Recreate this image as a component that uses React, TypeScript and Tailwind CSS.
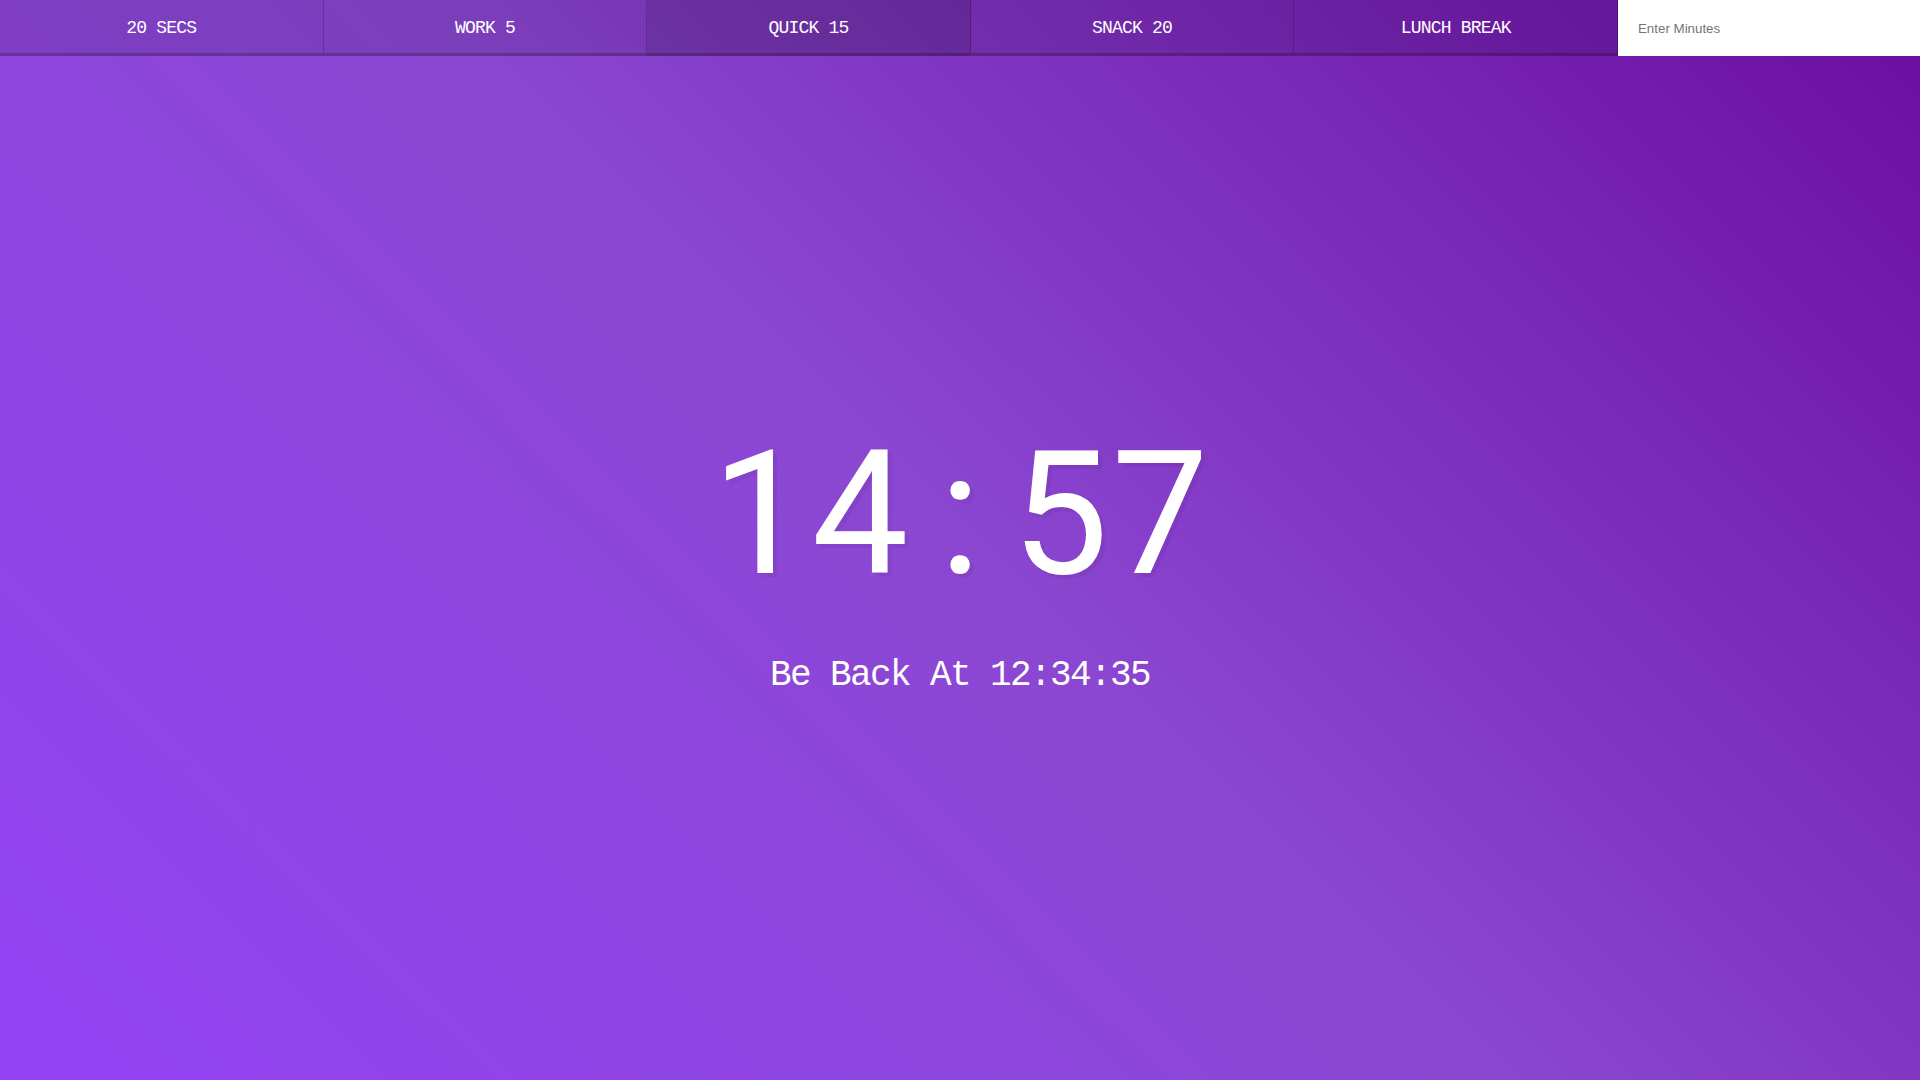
import React from "react";

const buttons = ["20 Secs", "Work 5", "Quick 15", "Snack 20", "Lunch Break"];

function Cells({ text, cls }: { text: string; cls: string }) {
  return (
    <div className="flex">
      {text.split("").map((c, i) => (
        <span key={i} className={cls}>
          {c}
        </span>
      ))}
    </div>
  );
}

export default function App() {
  return (
    <div className="flex min-h-screen w-full flex-col bg-[linear-gradient(45deg,#9342f5_0%,#8b47d1_50%,#6a0da1_100%)] text-center">
      <div className="flex h-[56px] w-full">
        {buttons.map((b, i) => (
          <button
            key={b}
            className={`flex-1 cursor-pointer border-r border-b-[3px] border-r-[rgba(0,0,0,0.2)] border-b-[rgba(0,0,0,0.2)] px-[10px] pt-[12px] pb-[8px] font-['Liberation_Mono',monospace] text-[18px] font-normal tracking-[-0.8px] text-white uppercase ${
              i === 2 ? "bg-[rgba(0,0,0,0.2)]" : "bg-[rgba(0,0,0,0.1)]"
            }`}
          >
            {b}
          </button>
        ))}
        <form className="flex w-[302px]" onSubmit={(e) => e.preventDefault()}>
          <input
            type="text"
            name="minutes"
            placeholder="Enter Minutes"
            className="w-full flex-1 border-0 bg-white px-[20px] pt-[21px] pb-[19px] font-['Liberation_Sans',Arial,sans-serif] text-[13.333px] text-black outline-none placeholder:text-[#757575]"
          />
        </form>
      </div>
      <div className="flex flex-1 flex-col items-center justify-center pb-[26px]">
        <div className="h-[200px] font-['Roboto',sans-serif] text-[172px] leading-[200px] font-normal text-white [text-shadow:4px_4px_0_rgba(0,0,0,0.05)]">
          <Cells text="14:57" cls="inline-block w-[100px] text-center" />
        </div>
        <p className="mt-[42px] h-[40px] font-['Liberation_Mono',monospace] text-[36px] leading-[40px] tracking-[-1.6px] text-white">
          Be Back At 12:34:35
        </p>
      </div>
    </div>
  );
}
